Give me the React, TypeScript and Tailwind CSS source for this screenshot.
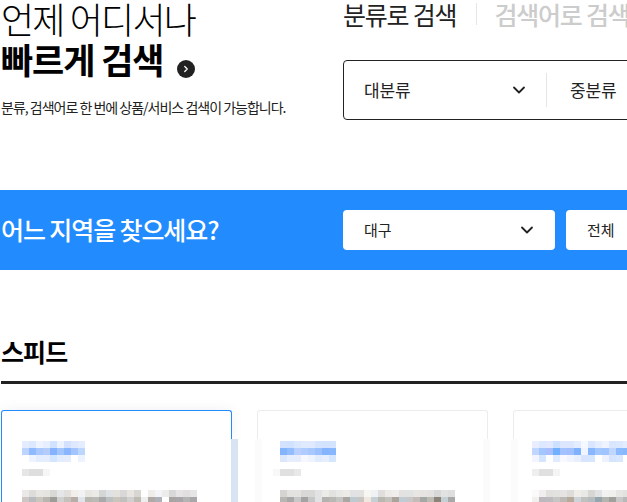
import { ChevronDown, ChevronRight } from "lucide-react";

type Cell = string;

const font = { fontFamily: '"Noto Sans CJK KR", "Noto Sans", sans-serif' };

// mosaic of the blurred text in the cards, 7px a cell
function Mosaic({ rows, className = "" }: { rows: Cell[][]; className?: string }) {
  return (
    <div className={className}>
      {rows.map((row, i) => (
        <div key={i} className="flex h-[7px]">
          {row.map((c, j) => (
            <div key={j} className="w-[7px] h-[7px]" style={{ backgroundColor: c }} />
          ))}
        </div>
      ))}
    </div>
  );
}

const cards = [
  {
    active: true,
    pad: "pl-[20px]",
    dateClass: "",
    title: [
      ["#e4ecff", "#dbe8ff", "#eef3ff", "#e6eeff", "#d0e2ff", "#ecf2ff", "#d3e1ff", "#dfe8ff", "#e4edff"],
      ["#bdd4ff", "#8fbaff", "#a9c8ff", "#b5cbf9", "#85b3ff", "#a3c5ff", "#8ab5ff", "#a2c5ff", "#bcd6ff"],
      ["#ffffff", "#eef4ff", "#e4edfd", "#e4edfd", "#d2e6ff", "#e3ecfd", "#e5edfd", "#ffffff", "#ecf2fe"],
    ],
    date: [["#e6e6e6", "#dedede", "#dedede", "#f6f6f6"]],
    text: [
      ["#ebe9e7", "#dcdcda", "#e8e6e2", "#e6e4e0", "#d8d8d4", "#e4e6e8", "#e2e0dc", "#f2eeea", "#f2f2f4", "#e8e6e2", "#eceae6", "#d4d6d6", "#dfe2e4", "#e4e2dc", "#d8d8d8", "#e8e4e0", "#d8d6d2", "#ffffff", "#f0ecea", "#f2f4f8", "#eeecea", "#d8d8d8", "#e6e4e4", "#e0e0e0", "#e6e4e4"],
      ["#ccc6c4", "#b8bcbe", "#c8c6be", "#b8b6ae", "#9c9c98", "#d0d0d0", "#c4c0ba", "#b8aea8", "#dde4ec", "#b8b8b0", "#bcbab4", "#a8aaaa", "#bcc0c0", "#cac6be", "#c0c0bc", "#d0d0d0", "#bebab4", "#eeeeee", "#b0aaa6", "#aeb2b8", "#ffffff", "#a8a4a4", "#a8a6a8", "#b4b4b4", "#a8a6a8"],
    ],
  },
  {
    active: false,
    pad: "pl-[23px]",
    dateClass: "-ml-[7px]",
    title: [
      ["#d2e2ff", "#d0e2ff", "#dbe7ff", "#e0eaff", "#e0e9ff", "#d4e4ff", "#d2e2ff", "#d4e4ff"],
      ["#85b4ff", "#94bdff", "#b8d0ff", "#b0cbff", "#a6c8ff", "#9ac0ff", "#84b4ff", "#88b6ff"],
      ["#dbe6fd", "#e6eefe", "#e6eefe", "#f6f8fe", "#eef4fe", "#e0ebfe", "#e6eefe", "#d4e6fe"],
    ],
    date: [["#f8f8f8", "#e0e0e0", "#e0e0e0", "#e8e8e8"]],
    text: [
      ["#d6d4d0", "#e2e2e0", "#e4e2e0", "#d8d8d6", "#d8d8d4", "#e0e2e4", "#ecebe8", "#e2e2e0", "#e8e8e6", "#eeeae8", "#e0e2e4", "#e4e2e0", "#f8f6f2", "#eef2f4", "#dfdedc", "#ecebe8", "#f0eeec", "#e4e2e0", "#e0e2e4", "#e8e6e2", "#e6e4e0", "#e4e2e0", "#d8d8d8", "#e2e2e2", "#dedede"],
      ["#b8b6b2", "#a8a8a8", "#c8c8c6", "#a4a2a2", "#c4c6c8", "#e0e2e4", "#b4b2ae", "#b8b8b4", "#c4c4c2", "#aaa6a2", "#bccad2", "#c8c6c2", "#f0e8e0", "#c4d0d4", "#b8b8b0", "#c4c2bc", "#aca49a", "#c0ccd4", "#c8c8c8", "#c4bcb8", "#a4a8a4", "#bcbcb4", "#8c8478", "#c4d0d4", "#a8a8a8"],
    ],
  },
  {
    active: false,
    pad: "pl-[19px]",
    dateClass: "",
    title: [
      ["#e8eeff", "#dce8ff", "#e2e8ff", "#cde0ff", "#dce6ff", "#dce6ff", "#e4ecff", "#f6f8ff", "#d8e6ff", "#e4eeff", "#eef3ff", "#d8e6ff", "#dce8ff", "#e4ecff"],
      ["#c0d6ff", "#a4c6ff", "#a8beff", "#72b0ff", "#a4c2ff", "#a0c0ff", "#7eb2ff", "#f0f4ff", "#88b6ff", "#a2c6ff", "#a0c4ff", "#c0d6ff", "#8cbaff", "#8ab8ff"],
      ["#f2f5ff", "#d4e6ff", "#ffffff", "#e0ebff", "#f8faff", "#f0f4fe", "#eaeffe", "#d8e4fe", "#d6e6ff", "#ffffff", "#eef2fe", "#d4e4fe", "#d8e6fe", "#ffffff"],
    ],
    date: [["#eeeeee", "#e0e0e0", "#e0e0e0", "#f4f4f4"]],
    text: [
      ["#fafafa", "#f0efee", "#e2e0de", "#e2e2e0", "#e6e4e2", "#dedcda", "#f0ece8", "#e8e8e6", "#d8d6d2", "#e0e2e4", "#f2f2f0", "#f0f0ee", "#e6e6e4", "#e2e2e0"],
      ["#f2f0ee", "#bcb8be", "#bcbcc0", "#c6c6c4", "#bdb9b6", "#b8aa9a", "#ccd4da", "#c0c0bc", "#b4bcc0", "#96a4ac", "#b4b4b0", "#a0a09c", "#c8c8c8", "#b8b8b8"],
    ],
  },
];

export default function App() {
  return (
    <div className="w-[627px] h-[502px] overflow-hidden bg-white text-black" style={font}>
      {/* search area */}
      <section className="flex h-[190px]">
        <div className="w-[343px] shrink-0 pl-px">
          <h2 className="text-[36px] leading-[36px] font-light tracking-[-1.8px] whitespace-nowrap">언제 어디서나</h2>
          <div className="flex items-center mt-[3px] h-[40px]">
            <h1 className="text-[35px] leading-[40px] font-bold tracking-[-1.1px] whitespace-nowrap">빠르게 검색</h1>
            <span className="flex items-center justify-center w-[18px] h-[18px] ml-[14px] mt-[20px] rounded-full bg-[#222]">
              <ChevronRight size={10} strokeWidth={3} className="text-white" />
            </span>
          </div>
          <p className="text-[14px] leading-[20px] tracking-[-1px] text-[#222] mt-[18px] whitespace-nowrap">
            분류, 검색어로 한 번에 상품/서비스 검색이 가능합니다.
          </p>
        </div>
        <div className="shrink-0 w-[400px]">
          <div className="flex items-center h-[28px]">
            <span className="text-[25px] leading-[28px] tracking-[-1.2px] text-[#222] whitespace-nowrap">분류로 검색</span>
            <span className="w-px h-[22px] bg-[#e5e5e5] mx-[20px]" />
            <span className="-ml-[3px] text-[25px] leading-[28px] tracking-[-1.2px] text-[#ccc] font-medium whitespace-nowrap">검색어로 검색</span>
          </div>
          <div className="flex items-center w-[400px] h-[60px] mt-[32px] border border-[#222] rounded-[4px]">
            <div className="flex items-center justify-between w-[202px] pl-[20px] pr-[17px]">
              <span className="text-[17px] tracking-[-0.2px] text-[#222]">대분류</span>
              <ChevronDown size={20} strokeWidth={2.2} className="text-[#222]" />
            </div>
            <span className="w-px h-[34px] bg-[#e5e5e5]" />
            <span className="text-[17px] tracking-[-0.2px] text-[#222] pl-[23px]">중분류</span>
          </div>
        </div>
      </section>

      {/* region bar */}
      <section className="flex items-center h-20 bg-[#228cff] pl-px">
        <h3 className="w-[342px] shrink-0 text-[25px] font-medium tracking-[-1.1px] text-white whitespace-nowrap">어느 지역을 찾으세요?</h3>
        <div className="flex items-center justify-between w-[212px] shrink-0 bg-white rounded-[4px] h-10 pl-[21px] pr-[18px]">
          <span className="text-[15px] text-[#222]">대구</span>
          <ChevronDown size={20} strokeWidth={2.2} className="text-[#222]" />
        </div>
        <div className="flex items-center bg-white rounded-[4px] h-10 pl-[21px] w-[200px] ml-[11px] shrink-0">
          <span className="text-[15px] text-[#222]">전체</span>
        </div>
      </section>

      {/* speed list */}
      <section className="pl-px mt-[61px]">
        <h3 className="text-[25px] leading-[40px] font-bold tracking-[-0.9px]">스피드</h3>
        <div className="h-[3px] bg-[#222] mt-[10px] w-[626px]" />
        <div className="flex gap-[25px] mt-[26px] w-[800px]">
          {cards.map((card, i) => (
            <div key={i} className="relative w-[231px] h-[93px] shrink-0">
              <div
                className={`h-[30px] border border-b-0 rounded-t-[3px] ${card.active ? "border-[#228cff] shadow-[0_0_14px_rgba(0,0,0,0.06)]" : "border-[#ececec]"}`}
              />
              <div className={`relative h-[63px] bg-white pt-[1px] ${card.pad} ${card.active ? "border-l border-[#228cff]" : ""}`}>
                <Mosaic rows={card.title} />
                <Mosaic rows={card.date} className={`mt-[7px] ${card.dateClass}`} />
                <Mosaic rows={card.text} className="mt-[14px]" />
              </div>
              {card.active ? (
                <div className="absolute left-[230px] top-[29px] bottom-0 w-[7px] bg-[#d8e4f2]" />
              ) : (
                <>
                  <div className="absolute -left-[2px] top-[29px] bottom-0 w-[7px] bg-[#fbfbfb]" />
                  <div className="absolute left-[226px] top-[29px] bottom-0 w-[7px] bg-[#fbfbfb]" />
                </>
              )}
            </div>
          ))}
        </div>
      </section>
    </div>
  );
}
